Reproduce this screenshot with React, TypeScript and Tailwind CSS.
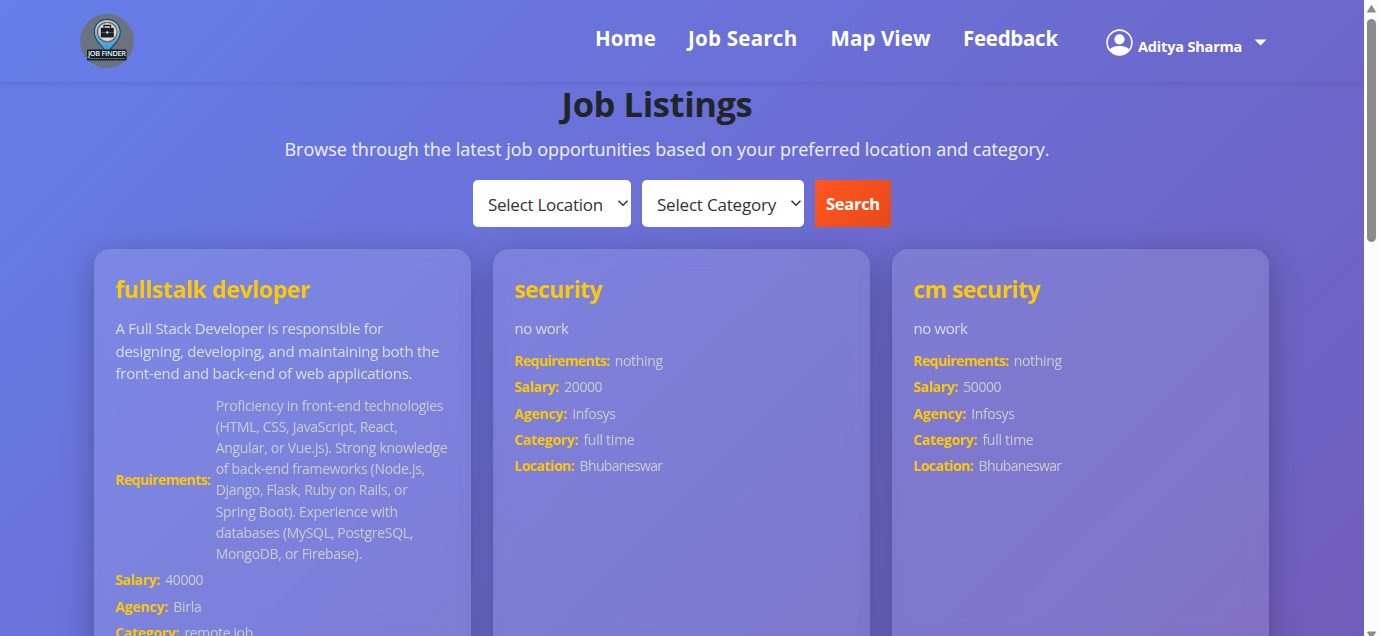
import React from "react";

type Detail = { label: string; labelClass: string; value: string[]; valueClass: string };
type Job = { title: string; titleClass: string; description: string[]; descClass: string; details: Detail[] };

const LABELS = {
  requirements: { label: "Requirements:", labelClass: "tracking-[-0.58px]" },
  salary: { label: "Salary:", labelClass: "tracking-[-0.36px]" },
  agency: { label: "Agency:", labelClass: "tracking-[-0.2px]" },
  category: { label: "Category:", labelClass: "tracking-[-0.3px]" },
  location: { label: "Location:", labelClass: "tracking-[-0.49px]" },
};

const basicDetails = (salary: string): Detail[] => [
  { ...LABELS.requirements, value: ["nothing"], valueClass: "tracking-[-0.3px]" },
  { ...LABELS.salary, value: [salary], valueClass: "tracking-[-0.4px]" },
  { ...LABELS.agency, value: ["Infosys"], valueClass: "tracking-[-0.4px]" },
  { ...LABELS.category, value: ["full time"], valueClass: "tracking-[-0.26px]" },
  { ...LABELS.location, value: ["Bhubaneswar"], valueClass: "tracking-[-0.65px]" },
];

const JOBS: Job[] = [
  {
    title: "fullstalk devloper",
    titleClass: "tracking-[-0.38px]",
    description: [
      "A Full Stack Developer is responsible for",
      "designing, developing, and maintaining both the",
      "front-end and back-end of web applications.",
    ],
    descClass: "tracking-[-0.27px]",
    details: [
      {
        ...LABELS.requirements,
        value: [
          "Proficiency in front-end technologies",
          "(HTML, CSS, JavaScript, React,",
          "Angular, or Vue.js). Strong knowledge",
          "of back-end frameworks (Node.js,",
          "Django, Flask, Ruby on Rails, or",
          "Spring Boot). Experience with",
          "databases (MySQL, PostgreSQL,",
          "MongoDB, or Firebase).",
        ],
        valueClass: "tracking-[-0.31px]",
      },
      { ...LABELS.salary, value: ["40000"], valueClass: "tracking-[-0.4px]" },
      { ...LABELS.agency, value: ["Birla"], valueClass: "tracking-[-0.3px]" },
      { ...LABELS.category, value: ["remote job"], valueClass: "tracking-[-0.35px]" },
    ],
  },
  { title: "security", titleClass: "tracking-[-0.6px]", description: ["no work"], descClass: "tracking-[-0.4px]", details: basicDetails("20000") },
  { title: "cm security", titleClass: "tracking-[-0.56px]", description: ["no work"], descClass: "tracking-[-0.4px]", details: basicDetails("50000") },
];

function Logo() {
  return (
    <svg className="h-[54px] w-[54px]" viewBox="0 0 54 54">
      <defs>
        <linearGradient id="pin" x1="0" y1="0" x2="0" y2="1">
          <stop offset="0" stopColor="#a9d3e4" />
          <stop offset="1" stopColor="#3598d4" />
        </linearGradient>
      </defs>
      <circle cx="27" cy="27" r="27" fill="#6b7280" />
      <path d="M27 5c-8.300 0-13.200 6-13.200 13.200 0 8.300 8 13.300 11.700 20.300h4c3-7 11.200-12 11.200-20.300 0-7.200-5.400-13.200-13.700-13.200z" fill="#183a56" />
      <path d="M27 6c-7.500 0-12.200 5.400-12.200 12.200 0 7.500 7.200 12.600 11.200 19.300h2.500c3.500-6.700 11.200-11.800 11.200-19.300 0-6.800-5.200-12.200-12.700-12.200z" fill="url(#pin)" />
      <circle cx="27.300" cy="18" r="10.300" fill="#24405a" />
      <circle cx="27.300" cy="18" r="9.300" fill="#e5dccd" stroke="#c98a62" strokeWidth="0.900" />
      <path d="M24 13.800v-2.300h6.500v2.300" fill="none" stroke="#14212e" strokeWidth="1.300" />
      <rect x="20.800" y="13.800" width="13" height="9.800" rx="1" fill="#14212e" />
      <path d="M20.800 18.500h13" stroke="#8a8f93" strokeWidth="0.500" />
      <rect x="26.300" y="17.300" width="2" height="2.300" fill="#e5dccd" />
      <circle cx="38.500" cy="29.500" r="1" fill="#a2563e" />
      <rect x="7" y="35.500" width="39.500" height="11" rx="1" fill="#14212c" />
      <text x="27" y="42.300" textAnchor="middle" textLength="38" fontSize="7.400" fontWeight="600" fill="#eef2f5" fontFamily="Open Sans, sans-serif">
        JOB FINDER
      </text>
      <path d="M9 44.600h36" stroke="#7f909c" strokeWidth="1" strokeDasharray="1.500 0.700" />
    </svg>
  );
}

function Header() {
  return (
    <header className="flex h-[82px] shrink-0 items-start pl-20 shadow-[0_2px_5px_rgba(0,0,0,0.08)]">
      <div className="pt-3.5">
        <Logo />
      </div>
      <nav className="ml-auto flex pt-[23px] text-[20.5px] leading-[30px] font-bold whitespace-nowrap text-white">
        <a className="w-[93px] tracking-[0.05px]">Home</a>
        <a className="w-[142.500px] tracking-[0.25px]">Job Search</a>
        <a className="w-[132.500px] tracking-[0.1px]">Map View</a>
        <a className="w-[144px] tracking-[-0.28px]">Feedback</a>
      </nav>
      <div className="flex w-[257px] pt-[29px] text-white">
        <svg className="-ml-px h-[27px] w-[27px]" viewBox="0 0 27 27">
          <clipPath id="avatar">
            <circle cx="13.500" cy="13.500" r="12.500" />
          </clipPath>
          <circle cx="13.500" cy="13.500" r="12.400" fill="none" stroke="currentColor" strokeWidth="1.600" />
          <circle cx="13.500" cy="10.300" r="5.100" fill="currentColor" />
          <path d="M2 23c2-4.500 6.500-6 11.500-6s9.500 1.500 11.500 6v4H2z" fill="currentColor" clipPath="url(#avatar)" />
        </svg>
        <span className="ml-[5px] w-[116px] pt-[8px] text-[14.500px] leading-5 font-bold tracking-[-0.18px] whitespace-nowrap">Aditya Sharma</span>
        <svg className="mt-[10px] h-[7px] w-[13px]" viewBox="0 0 13 7">
          <path d="M0.500 0.500h12l-6 6z" fill="currentColor" />
        </svg>
      </div>
    </header>
  );
}

function Select({ label, className }: { label: string; className: string }) {
  return (
    <button className={"flex h-[47px] items-center justify-between rounded-[5px] bg-white pr-[2px] pl-[15px] text-[17px] whitespace-nowrap text-[#333] " + className}>
      <span className="pt-[3px]">{label}</span>
      <svg className="mb-px h-3 w-3" viewBox="0 0 12 12">
        <path d="M1.500 3.800L6 8.300l4.500-4.500" fill="none" stroke="#333" strokeWidth="1.500" />
      </svg>
    </button>
  );
}

function JobCard({ job }: { job: Job }) {
  return (
    <article className="w-[377px] rounded-[16px] bg-white/[0.12] px-[21.500px] pt-[22px] shadow-[0_8px_32px_rgba(0,0,0,0.26)] backdrop-blur-[10px]">
      <h3 className={"text-[23px] leading-[36px] font-bold text-[#fdca0a] " + job.titleClass}>{job.title}</h3>
      <p className={"mt-[10.300px] text-[15px] leading-[22.600px] whitespace-nowrap text-[#ddd] " + job.descClass}>
        {job.description.map((line) => (
          <span key={line} className="block">{line}</span>
        ))}
      </p>
      <div className="mt-[10px] flex flex-col gap-[5.300px] text-[14px] leading-[21.100px] whitespace-nowrap">
        {job.details.map((d) => (
          <div key={d.label} className="flex items-center gap-[5px]">
            <strong className={"font-bold text-[#fdca0a] " + d.labelClass}>{d.label}</strong>
            <span className={"text-[#ccc] " + d.valueClass}>
              {d.value.map((line) => (
                <span key={line} className="block">{line}</span>
              ))}
            </span>
          </div>
        ))}
      </div>
    </article>
  );
}

function Scrollbar() {
  return (
    <div className="flex w-[16px] shrink-0 flex-col items-center bg-[#fcfcfc] pr-px">
      <svg className="mt-[4px] h-[9px] w-[11px]" viewBox="0 0 11 9">
        <path d="M1.500 8L5.500 1.500 9.500 8z" fill="#8b8b8b" stroke="#8b8b8b" strokeLinejoin="round" />
      </svg>
      <div className="mt-[6px] h-[223px] w-[9px] rounded-full bg-[#8b8b8b]" />
      <svg className="mt-auto h-[5px] w-[11px]" viewBox="0 0 11 5">
        <path d="M1.500 1L9.500 1 5.500 7.500z" fill="#8b8b8b" stroke="#8b8b8b" strokeLinejoin="round" />
      </svg>
    </div>
  );
}

export default function App() {
  return (
    <div className="flex h-[636px] w-[1380px] overflow-hidden font-['Open_Sans','Noto_Sans',sans-serif]">
      <div className="w-[1364px] overflow-hidden">
        <div className="flex h-[1722px] flex-col bg-[linear-gradient(135deg,#667eea,#764ba2)]">
          <Header />
          <main className="flex flex-col">
            <h1 className="pt-px pr-[50px] text-center text-[34.500px] leading-[42px] font-bold tracking-[-0.4px] text-[#212529]">Job Listings</h1>
            <p className="mt-2.5 pr-[30px] text-center text-[18px] leading-[28px] tracking-[-0.02px] text-white/90">
              Browse through the latest job opportunities based on your preferred location and category.
            </p>
            <div className="mt-[17px] flex justify-center gap-[11px]">
              <Select label="Select Location" className="w-[158px] tracking-[-0.27px]" />
              <Select label="Select Category" className="w-[162px] tracking-[-0.2px]" />
              <button className="h-[47px] w-[76px] bg-[linear-gradient(135deg,#ff5722,#e64a19)] pt-0.5 text-[16.500px] font-bold tracking-[-0.3px] text-white">
                Search
              </button>
            </div>
            <section className="mt-[22px] flex h-[500px] gap-[22px] pl-[94px]">
              {JOBS.map((job) => (
                <JobCard key={job.title} job={job} />
              ))}
            </section>
          </main>
        </div>
      </div>
      <Scrollbar />
    </div>
  );
}
